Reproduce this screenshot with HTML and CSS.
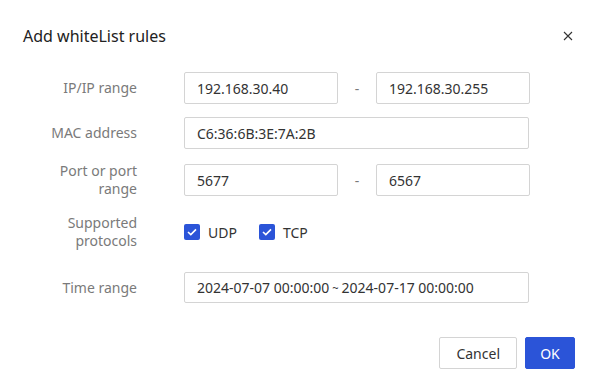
FILE: index.html
```html
<!DOCTYPE html>
<html lang="en">
<head>
  <meta charset="UTF-8" />
  <meta name="viewport" content="width=device-width, initial-scale=1.0"/>
  <title>Add whiteList rules</title>
  <link rel="stylesheet" href="styles.css">
</head>
<body>

  <div class="dialog">
    <!-- Header -->
    <div class="dialog-header">
      <h3>Add whiteList rules</h3>
      <span class="close">
        <svg width="10" height="10" viewBox="0 0 10 10"><path d="M1 1 L9 9 M9 1 L1 9" stroke="#333" stroke-width="1.1" fill="none"/></svg>
      </span>
    </div>

    <!-- Form -->
    <div class="dialog-body">
      <div class="form-row">
        <label class="form-label">IP/IP range</label>
        <div class="range">
          <input type="text" value="192.168.30.40" />
          <span class="dash">-</span>
          <input type="text" value="192.168.30.255" />
        </div>
      </div>

      <div class="form-row">
        <label class="form-label">MAC address</label>
        <input type="text" class="full" value="C6:36:6B:3E:7A:2B" />
      </div>

      <div class="form-row">
        <label class="form-label">Port or port range</label>
        <div class="range">
          <input type="text" value="5677" />
          <span class="dash">-</span>
          <input type="text" value="6567" />
        </div>
      </div>

      <div class="form-row protocols">
        <label class="form-label">Supported protocols</label>
        <div class="checks">
          <label class="check"><span class="box"><svg width="10" height="8" viewBox="0 0 10 8"><path d="M1 4 L3.8 6.6 L9 1.4" stroke="#fff" stroke-width="1.6" fill="none"/></svg></span>UDP</label>
          <label class="check"><span class="box"><svg width="10" height="8" viewBox="0 0 10 8"><path d="M1 4 L3.8 6.6 L9 1.4" stroke="#fff" stroke-width="1.6" fill="none"/></svg></span>TCP</label>
        </div>
      </div>

      <div class="form-row">
        <label class="form-label">Time range</label>
        <div class="date-range">
          <span>2024-07-07 00:00:00</span>
          <span class="tilde">~</span>
          <span>2024-07-17 00:00:00</span>
        </div>
      </div>
    </div>

    <!-- Footer -->
    <div class="dialog-footer">
      <button class="btn">Cancel</button>
      <button class="btn btn-primary">OK</button>
    </div>
  </div>

</body>
</html>
```

FILE: styles.css
```css
:root {
  --primary: #2b54d8;
  --text-main: #333333;
  --label: #7a7a7a;
  --border: #d4d4d4;
}

body {
  margin: 0;
  font-family: "Noto Sans", "Liberation Sans", sans-serif;
  background: #ffffff;
  color: var(--text-main);
}

.dialog {
  width: 597px;
  height: 392px;
  box-sizing: border-box;
  padding: 0 22px 0 23px;
}

.dialog-header {
  display: flex;
  justify-content: space-between;
  align-items: center;
  height: 72px;
  padding-bottom: 1px;
  box-sizing: border-box;
}

.dialog-header h3 {
  margin: 0;
  font-size: 16px;
  font-weight: 400;
  color: #222;
}

.close {
  display: flex;
  margin-right: 2px;
  cursor: pointer;
}

.dialog-body {
  display: flex;
  flex-direction: column;
}

.form-row {
  display: flex;
  align-items: center;
  gap: 47px;
  margin-bottom: 13px;
}

.form-label {
  width: 114px;
  flex-shrink: 0;
  text-align: right;
  font-size: 14px;
  line-height: 18px;
  color: var(--label);
}

input {
  box-sizing: border-box;
  height: 32px;
  width: 154px;
  padding: 0 12px;
  font-family: inherit;
  font-size: 14px;
  color: var(--text-main);
  border: 1px solid var(--border);
  border-radius: 2px;
  outline: none;
}

input.full,
.date-range {
  width: 345px;
}

.range {
  display: flex;
  align-items: center;
}

.dash {
  width: 38px;
  text-align: center;
  color: var(--label);
  font-size: 14px;
}

.protocols {
  margin-top: 3px;
  margin-bottom: 22px;
}

.checks {
  display: flex;
  gap: 22px;
}

.check {
  display: flex;
  align-items: center;
  gap: 8px;
  font-size: 14px;
}

.box {
  width: 16px;
  height: 16px;
  border-radius: 2px;
  background: var(--primary);
  display: flex;
  align-items: center;
  justify-content: center;
}

.date-range {
  box-sizing: border-box;
  height: 31px;
  padding: 0 12px;
  display: flex;
  align-items: center;
  font-size: 14px;
  border: 1px solid var(--border);
  border-radius: 2px;
}

.tilde {
  font-size: 11px;
  margin: 0 3px;
}

.dialog-footer {
  display: flex;
  justify-content: flex-end;
  gap: 8px;
  margin-top: 21px;
}

.btn {
  height: 32px;
  padding: 0 16px;
  font-family: inherit;
  font-size: 14px;
  color: var(--text-main);
  background: #fff;
  border: 1px solid var(--border);
  border-radius: 2px;
  cursor: pointer;
}

.btn-primary {
  width: 50px;
  padding: 0;
  background: var(--primary);
  border-color: var(--primary);
  color: #fff;
}
```
